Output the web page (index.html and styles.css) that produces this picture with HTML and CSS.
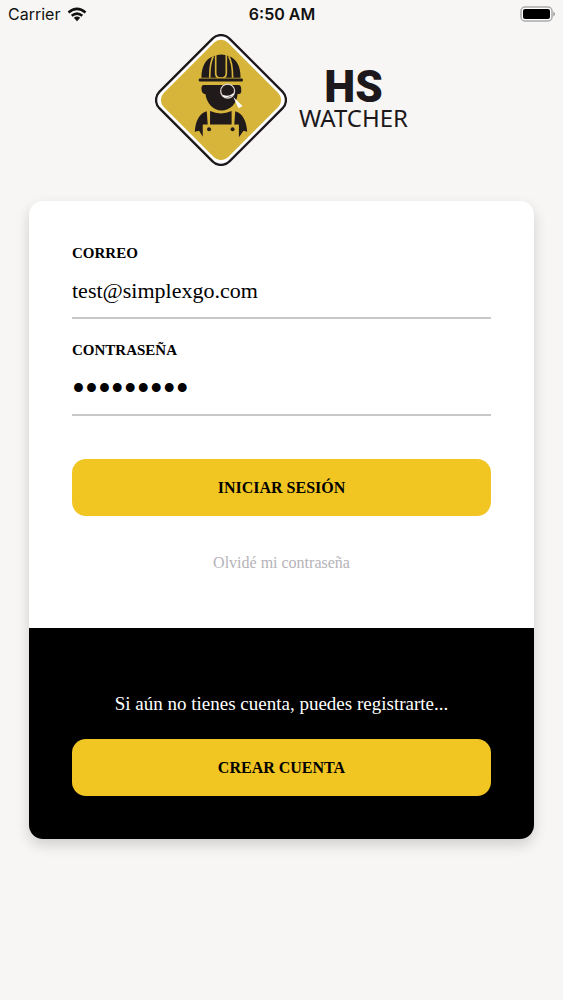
FILE: index.html
```html
<!DOCTYPE html>
<html lang="es">
<head>
    <meta charset="UTF-8">
    <meta name="viewport" content="width=device-width, initial-scale=1.0">
    <title>HS Watcher</title>
    <link rel="stylesheet" href="styles.css">
</head>
<body>

    <div class="status-bar">
        <div class="carrier">
            <span>Carrier</span>
            <svg class="wifi" viewBox="0 0 20 15" width="20" height="15">
                <path d="M1.5 5.5Q10-1.8 18.5 5.5M4.7 8.8Q10 4.4 15.3 8.8" fill="none" stroke="#111" stroke-width="2.6"/>
                <path d="M6.8 10.8Q10 8.2 13.2 10.8L10 14.2Z" fill="#111"/>
            </svg>
        </div>
        <span class="time">6:50 AM</span>
        <svg class="battery" viewBox="0 0 36 16" width="36" height="16">
            <rect x="1" y="1" width="31" height="14" rx="4" fill="#fff" stroke="#aaa" stroke-width="1.5"/>
            <rect x="3" y="3" width="27" height="10" rx="2" fill="#000"/>
            <path d="M33.5 5.5Q36 8 33.5 10.5Z" fill="#777"/>
        </svg>
    </div>

    <header class="logo">
        <svg viewBox="29 16 398 398" width="132" height="132">
            <rect x="79" y="66" width="298" height="298" rx="36" transform="rotate(45 228 215)" fill="#fff" stroke="#1c181b" stroke-width="7"/>
            <rect x="91" y="78" width="274" height="274" rx="30" transform="rotate(45 228 215)" fill="#d7b43a"/>
            <!-- helmet -->
            <path d="M169 148C169 112 183 91 204 83Q229 72 253 83C275 92 287 112 287 148Z" fill="#211a1b"/>
            <path d="M212 78V134Q212 149 228 149Q244 149 244 134V78M205 83Q194 101 194 148M251 83Q263 101 263 148" fill="none" stroke="#d7b43a" stroke-width="5"/>
            <rect x="161" y="150" width="133" height="9" rx="3" fill="#211a1b"/>
            <!-- head -->
            <path d="M174 170H283Q289 172 289 181V190Q289 196 283 197H278C276 226 255 247 230 247C205 247 184 224 181 197H178Q169 195 169 179Q169 172 174 170Z" fill="#211a1b"/>
            <!-- body and overalls -->
            <path d="M185 249C163 254 151 279 149 311L162 308L173 326V289H188ZM271 249C293 254 305 279 307 311L296 308L282 327V289H268Z" fill="#211a1b"/>
            <path d="M195 248Q228 263 260 248V289H195Z" fill="#211a1b"/>
            <circle cx="192" cy="303" r="6" fill="#211a1b"/>
            <circle cx="263" cy="303" r="6" fill="#211a1b"/>
            <!-- magnifying glass -->
            <circle cx="248" cy="188" r="21" fill="none" stroke="#d9d2c8" stroke-width="4"/>
            <path d="M234 202Q252 209 266 196" fill="none" stroke="#fff" stroke-width="4"/>
            <path d="M265 206L293 233L281 240Z" fill="#fff"/>
        </svg>
        <div class="brand">
            <span class="brand-top">HS</span>
            <span class="brand-name">WATCHER</span>
        </div>
    </header>

    <main class="card">
        <form class="login">
            <label for="email">CORREO</label>
            <input type="email" id="email" value="test@simplexgo.com">
            <label for="password">CONTRASEÑA</label>
            <input type="password" id="password" value="simplexgo">
            <button type="button">INICIAR SESIÓN</button>
            <a href="#">Olvidé mi contraseña</a>
        </form>
        <section class="register">
            <p>Si aún no tienes cuenta, puedes registrarte...</p>
            <button type="button">CREAR CUENTA</button>
        </section>
    </main>

</body>
</html>
```
FILE: styles.css
```css
* {
    box-sizing: border-box;
}
body {
    font-family: "Liberation Serif", serif;
    background-color: #f7f6f4;
    color: #000;
    margin: 0;
}
.status-bar {
    display: grid;
    grid-template-columns: 1fr auto 1fr;
    align-items: center;
    height: 28px;
    padding: 0 7px 0 8px;
    font-family: Inter, sans-serif;
    font-size: 16px;
    color: #111;
}
.carrier {
    display: flex;
    align-items: center;
    gap: 7px;
}
.time {
    font-weight: 600;
}
.battery {
    justify-self: end;
}
.logo {
    display: flex;
    justify-content: center;
    align-items: center;
    gap: 12px;
    padding-top: 6px;
}
.brand {
    display: flex;
    flex-direction: column;
    align-items: center;
    color: #1c181b;
}
.brand-top {
    font-family: Roboto, sans-serif;
    font-size: 44px;
    font-weight: 900;
    line-height: 36px;
}
.brand-name {
    font-family: "Noto Sans", sans-serif;
    font-size: 24px;
    line-height: 26px;
}
.card {
    margin: 35px 29px;
    background-color: #fff;
    border-radius: 14px;
    overflow: hidden;
    box-shadow: 0 6px 14px rgba(0, 0, 0, 0.16);
}
.login {
    display: flex;
    flex-direction: column;
    padding: 42px 43px 55px;
}
label {
    font-size: 15px;
    font-weight: bold;
    line-height: 20px;
}
input {
    width: 100%;
    height: 56px;
    margin: 0 0 21px;
    padding: 2px 0 0;
    border: none;
    border-bottom: 2px solid #c8c8c8;
    background: none;
    font-family: "Liberation Serif", serif;
    font-size: 22px;
    color: #000;
    outline: none;
}
#password {
    font-size: 37px;
    margin-bottom: 43px;
}
button {
    width: 100%;
    height: 57px;
    border: none;
    border-radius: 14px;
    background-color: #f1c522;
    font-family: "Liberation Serif", serif;
    font-size: 16px;
    font-weight: bold;
    color: #000;
}
.login a {
    align-self: center;
    margin-top: 37px;
    font-size: 16px;
    line-height: 20px;
    color: #b5b3b8;
    text-decoration: none;
}
.register {
    background-color: #000;
    padding: 66px 43px 43px;
    text-align: center;
}
.register p {
    margin: 0 0 25px;
    font-size: 19px;
    line-height: 20px;
    color: #fff;
}
```
